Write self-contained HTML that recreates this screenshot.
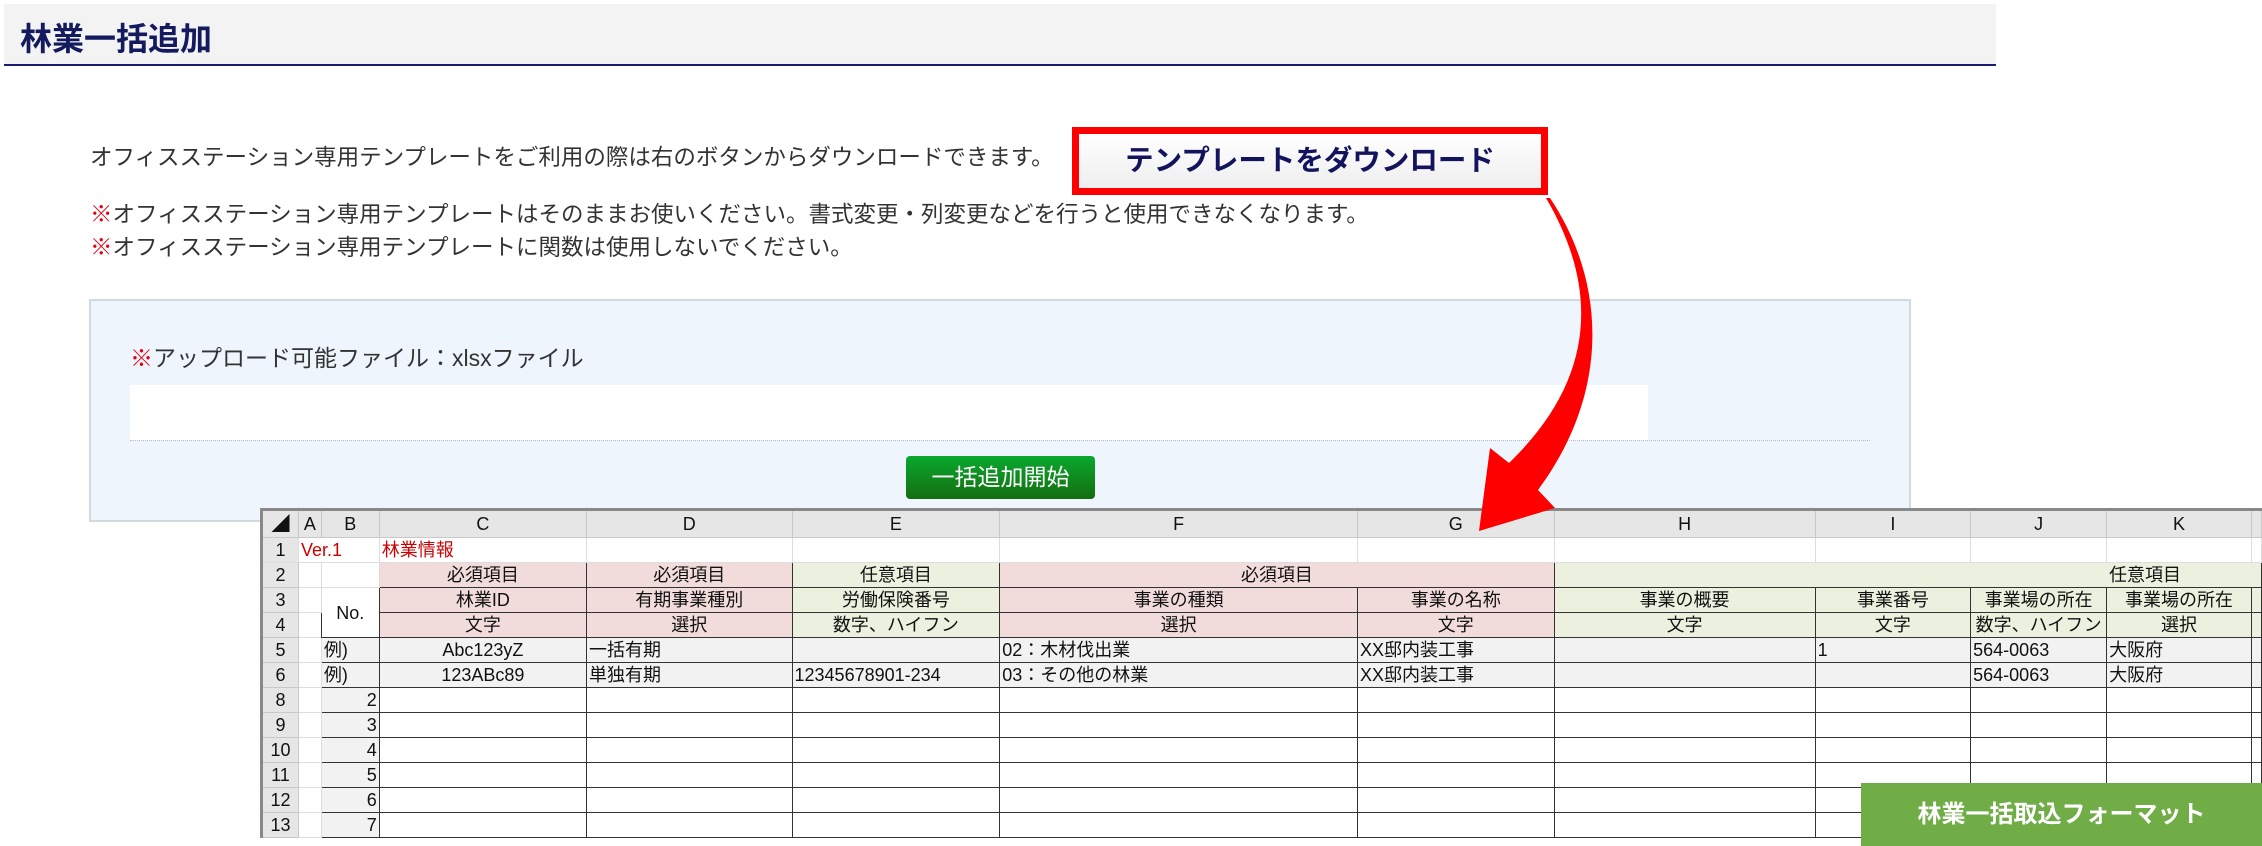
<!DOCTYPE html>
<html><head><meta charset="utf-8">
<style>
*{margin:0;padding:0;box-sizing:border-box}
body{width:2262px;height:846px;overflow:hidden;background:#fff;position:relative;font-family:"Liberation Sans","Noto Sans CJK JP",sans-serif;color:#333}
.abs{position:absolute}
.hdr{left:4px;top:4px;width:1992px;height:62px;background:#f3f3f3;border-bottom:2px solid #1a1a6e}
.hdr span{position:absolute;left:16px;top:10px;font-size:32px;font-weight:bold;color:#141a5e}
.t{font-size:22.5px;white-space:nowrap;color:#333}
.r{color:#e60012}
.dl{left:1072px;top:127px;width:476px;height:68px;border:7px solid #f00;background:linear-gradient(#fff,#eee);font-size:28.5px;font-weight:bold;color:#14145e;text-align:center;line-height:54px}
.panel{left:89px;top:299px;width:1822px;height:223px;background:#eef5fc;border:2px solid #d4d9e0}
.inp{left:130px;top:385px;width:1518px;height:55px;background:#fff}
.dot{left:130px;top:440px;width:1740px;border-top:1px dotted #bbb}
.go{left:906px;top:456px;width:189px;height:43px;border-radius:4px;background:linear-gradient(#0aa82e,#136e10);color:#fff;font-size:23px;text-align:center;line-height:43px}
table{position:absolute;left:260px;top:508px;border-collapse:collapse;table-layout:fixed;font-size:18px;color:#111;background:#fff;border:3px solid #888;border-right:none;border-bottom:none}
td{height:25px;border:1.5px solid #333;white-space:nowrap;overflow:hidden;text-align:center;line-height:22px;padding:0 2px}
tr.h td{height:28px;background:#e6e6e6;border:1px solid #c8c8c8;font-size:18px}
td.n{background:#e6e6e6;border:1px solid #c8c8c8;font-size:18px}
tr.r1 td{border:1px solid #ddd}
.p{background:#f2dcdb}.g{background:#ebf1de}.e{background:#f2f2f2}
.L{text-align:left}.R{text-align:right}
.lab{left:1861px;top:783px;width:401px;height:63px;background:#70ad47;color:#fff;font-size:24px;font-weight:bold;text-align:center;line-height:63px}
</style></head><body>
<div class="abs hdr"><span>林業一括追加</span></div>
<div class="abs t" style="left:90px;top:140px">オフィスステーション専用テンプレートをご利用の際は右のボタンからダウンロードできます。</div>
<div class="abs dl">テンプレートをダウンロード</div>
<div class="abs t" style="left:90px;top:197px"><span class="r">※</span>オフィスステーション専用テンプレートはそのままお使いください。書式変更・列変更などを行うと使用できなくなります。</div>
<div class="abs t" style="left:90px;top:230px"><span class="r">※</span>オフィスステーション専用テンプレートに関数は使用しないでください。</div>
<div class="abs panel"></div>
<div class="abs t" style="left:130px;top:339px;font-size:23px"><span class="r">※</span>アップロード可能ファイル：xlsxファイル</div>
<div class="abs inp"></div>
<div class="abs dot"></div>
<div class="abs go">一括追加開始</div>
<table>
<colgroup><col style="width:37px"><col style="width:23px"><col style="width:58px"><col style="width:208px"><col style="width:206px"><col style="width:208px"><col style="width:359px"><col style="width:197px"><col style="width:262px"><col style="width:156px"><col style="width:136px"><col style="width:145px"><col style="width:10px"></colgroup>
<tr class="h"><td>◢</td><td>A</td><td>B</td><td>C</td><td>D</td><td>E</td><td>F</td><td>G</td><td>H</td><td>I</td><td>J</td><td>K</td><td></td></tr>
<tr class="r1"><td class="n">1</td><td colspan="2" class="L" style="color:#c00">Ver.1</td><td class="L" style="color:#c00">林業情報</td><td></td><td></td><td></td><td></td><td></td><td></td><td></td><td></td><td></td></tr>
<tr><td class="n">2</td><td style="border-color:#ddd"></td><td style="border-color:#ddd"></td><td class="p">必須項目</td><td class="p">必須項目</td><td class="g">任意項目</td><td class="p" colspan="2">必須項目</td><td class="g R" colspan="5" style="padding-right:80px">任意項目</td></tr>
<tr><td class="n">3</td><td style="border-color:#ddd"></td><td rowspan="2">No.</td><td class="p">林業ID</td><td class="p">有期事業種別</td><td class="g">労働保険番号</td><td class="p">事業の種類</td><td class="p">事業の名称</td><td class="g">事業の概要</td><td class="g">事業番号</td><td class="g">事業場の所在</td><td class="g">事業場の所在</td><td class="g"></td></tr>
<tr><td class="n">4</td><td style="border-color:#ddd"></td><td class="p">文字</td><td class="p">選択</td><td class="g">数字、ハイフン</td><td class="p">選択</td><td class="p">文字</td><td class="g">文字</td><td class="g">文字</td><td class="g">数字、ハイフン</td><td class="g">選択</td><td class="g"></td></tr>
<tr><td class="n">5</td><td style="border-color:#ddd"></td><td class="e L">例)</td><td class="e">Abc123yZ</td><td class="e L">一括有期</td><td class="e"></td><td class="e L">02：木材伐出業</td><td class="e L">XX邸内装工事</td><td class="e"></td><td class="e L">1</td><td class="e L">564-0063</td><td class="e L">大阪府</td><td class="e"></td></tr>
<tr><td class="n">6</td><td style="border-color:#ddd"></td><td class="e L">例)</td><td class="e">123ABc89</td><td class="e L">単独有期</td><td class="e L">12345678901-234</td><td class="e L">03：その他の林業</td><td class="e L">XX邸内装工事</td><td class="e"></td><td class="e"></td><td class="e L">564-0063</td><td class="e L">大阪府</td><td class="e"></td></tr>
<tr><td class="n">8</td><td style="border-color:#ddd"></td><td class="e R">2</td><td></td><td></td><td></td><td></td><td></td><td></td><td></td><td></td><td></td><td></td></tr>
<tr><td class="n">9</td><td style="border-color:#ddd"></td><td class="e R">3</td><td></td><td></td><td></td><td></td><td></td><td></td><td></td><td></td><td></td><td></td></tr>
<tr><td class="n">10</td><td style="border-color:#ddd"></td><td class="e R">4</td><td></td><td></td><td></td><td></td><td></td><td></td><td></td><td></td><td></td><td></td></tr>
<tr><td class="n">11</td><td style="border-color:#ddd"></td><td class="e R">5</td><td></td><td></td><td></td><td></td><td></td><td></td><td></td><td></td><td></td><td></td></tr>
<tr><td class="n">12</td><td style="border-color:#ddd"></td><td class="e R">6</td><td></td><td></td><td></td><td></td><td></td><td></td><td></td><td></td><td></td><td></td></tr>
<tr><td class="n">13</td><td style="border-color:#ddd"></td><td class="e R">7</td><td></td><td></td><td></td><td></td><td></td><td></td><td></td><td></td><td></td><td></td></tr>
</table>
<svg class="abs" style="left:0;top:0" width="2262" height="846"><path d="M1546,198 C1600,290 1595,380 1509,463 L1490,448 L1479,531 L1555,508 L1538,490 C1612,390 1605,280 1550,198 Z" fill="#f00"/></svg>
<div class="abs lab">林業一括取込フォーマット</div>
</body></html>
